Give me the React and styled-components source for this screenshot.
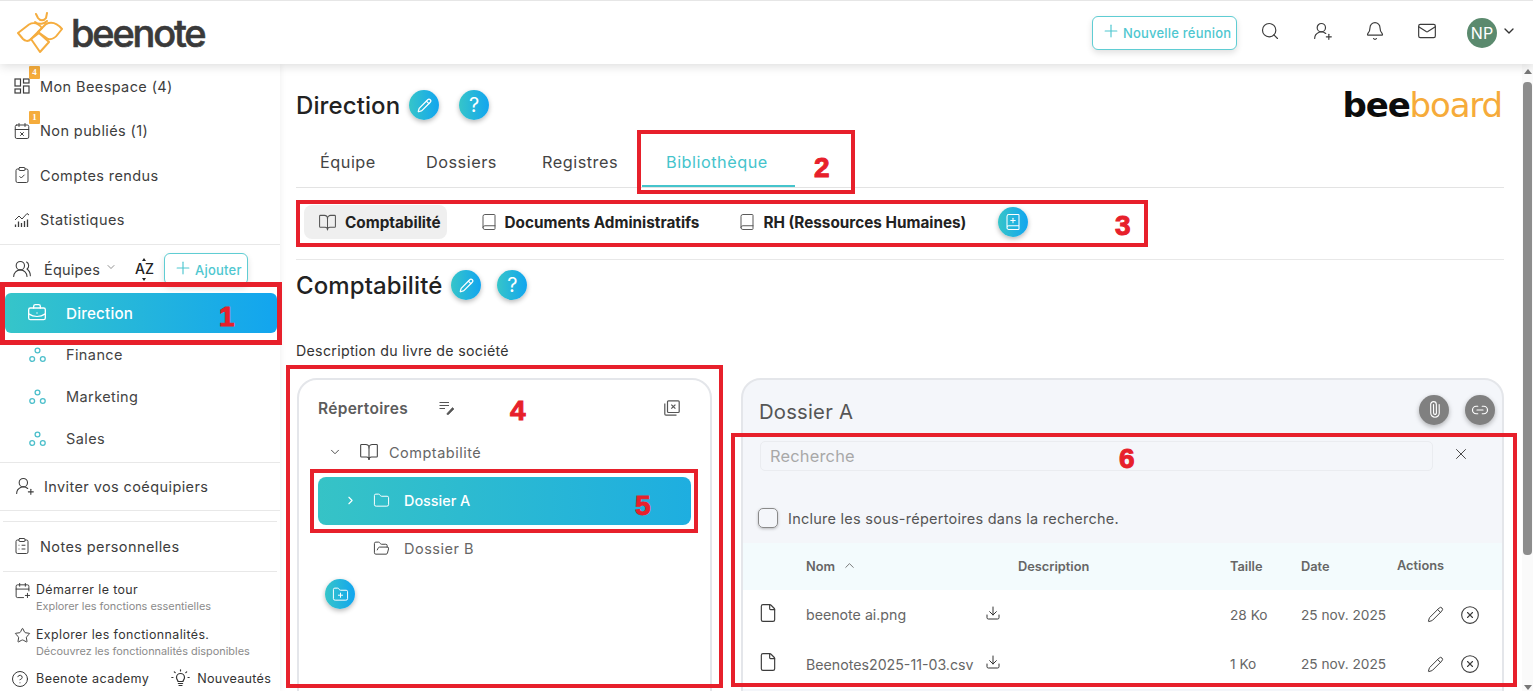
import styled, { createGlobalStyle } from "styled-components";
import {
  Bell,
  Book,
  BookOpen,
  BookPlus,
  BriefcaseBusiness,
  CalendarPlus,
  CalendarX,
  ChevronDown,
  ChevronRight,
  ChevronUp,
  CircleHelp,
  CircleX,
  ClipboardCheck,
  ClipboardList,
  Download,
  File,
  Folder,
  FolderOpen,
  FolderPlus,
  Link2,
  Mail,
  Paperclip,
  Pencil,
  Plus,
  Search,
  Star,
  UserRoundPlus,
  UsersRound,
  X,
} from "lucide-react";

const FONT = `Inter, "Liberation Sans", sans-serif`;
const BRAND = "linear-gradient(90deg, #36c5c9, #12a5ef)";

const GlobalStyle = createGlobalStyle`
  html, body {
    margin: 0;
    height: 100%;
    overflow: hidden;
    background: #fff;
    font-family: ${FONT};
    color: #333;
  }
  * { box-sizing: border-box; }
  svg { flex: none; }
`;

const Page = styled.div`
  position: relative;
  width: 1533px;
  height: 691px;
  overflow: hidden;
`;

// top bar
const TopBar = styled.header`
  position: relative;
  z-index: 2;
  height: 64px;
  display: flex;
  align-items: center;
  padding: 0 16px 0 17px;
  background: #fff;
  border-top: 1px solid #e6e6e6;
  box-shadow: 0 2px 10px rgba(0, 0, 0, 0.14);
`;

const Wordmark = styled.span`
  margin: 0 0 0 8px;
  font-size: 38px;
  font-weight: 500;
  letter-spacing: -2.2px;
  line-height: 40px;
  color: #3a3a3a;
  -webkit-text-stroke: 0.6px #3a3a3a;
`;

const TopActions = styled.div`
  margin-left: auto;
  display: flex;
  align-items: center;
  color: #3c3c3c;
`;

const OutlineButton = styled.button`
  display: flex;
  align-items: center;
  gap: 2px;
  height: ${(p) => p.$h}px;
  width: ${(p) => p.$w}px;
  padding: 1px 0 0 8px;
  border: 1px solid #5fcdd3;
  border-radius: 6px;
  background: #fff;
  box-shadow: 0 3px 6px rgba(0, 0, 0, 0.12);
  color: #4fc7d0;
  font-family: ${FONT};
  font-size: 13px;
  font-weight: 500;
  letter-spacing: 0.2px;
  & > svg { margin-top: -4px; }
`;

const TopIcon = styled.span`
  display: flex;
  justify-content: center;
  width: 20px;
  margin-top: -4px;
  margin-left: ${(p) => p.$ml}px;
`;

const Avatar = styled.span`
  display: flex;
  align-items: center;
  justify-content: center;
  width: 30px;
  height: 30px;
  margin-left: 30px;
  border-radius: 50%;
  background: #5b8a6e;
  color: #fff;
  font-size: 16px;
`;

const AvatarChevron = styled.span`
  display: flex;
  margin: -4px 0 0 4px;
  color: #333;
`;

const Body = styled.div`
  display: flex;
  height: 627px;
`;

// sidebar
const Sidebar = styled.aside`
  flex: 0 0 280px;
  display: flex;
  flex-direction: column;
  overflow: hidden;
  box-shadow: 1px 0 6px rgba(0, 0, 0, 0.06);
`;

const NavRow = styled.div`
  position: relative;
  display: flex;
  flex: none;
  align-items: center;
  height: ${(p) => p.$h || 44.5}px;
  padding-left: ${(p) => p.$pl || 13}px;
  gap: 9px;
  font-size: 14.5px;
  color: #3d3d3d;
  letter-spacing: 0.4px;
`;

const NavIcon = styled.span`
  display: flex;
  justify-content: center;
  width: ${(p) => p.$w || 18}px;
`;

const Badge = styled.span`
  position: absolute;
  left: 29px;
  top: 2px;
  width: 11px;
  height: 13px;
  border-radius: 1px;
  background: #f5ac3c;
  color: #fff;
  font-family: "Liberation Serif", serif;
  font-size: 9px;
  font-weight: 700;
  line-height: 13px;
  letter-spacing: 0;
  text-align: center;
`;

const Rule = styled.hr`
  flex: none;
  margin: ${(p) => p.$mt || 0}px ${(p) => p.$inset || 0}px 0;
  border: 0;
  border-top: 1px solid #e8e8e8;
`;

const TeamsRow = styled.div`
  display: flex;
  flex: none;
  align-items: center;
  height: 48px;
  padding-left: 12px;
  font-size: 14.5px;
  color: #3d3d3d;
`;

const TeamsLabel = styled.span`
  margin-left: 12px;
  letter-spacing: 0.2px;
`;

const TeamsChevron = styled.span`
  display: flex;
  margin: -4px 0 0 5px;
  color: #555;
`;

const SortAz = styled.span`
  position: relative;
  width: 18px;
  margin: 0 11px 0 18px;
  font-size: 14px;
  font-weight: 500;
  line-height: 18px;
  color: #222;
  &::before, &::after {
    content: "";
    position: absolute;
    left: 7px;
    border-left: 2px solid transparent;
    border-right: 2px solid transparent;
  }
  &::before { top: -2px; border-bottom: 3px solid #222; }
  &::after { bottom: -3px; border-top: 3px solid #222; }
`;

const TeamPill = styled.div`
  display: flex;
  flex: none;
  align-items: center;
  gap: 19px;
  height: 40px;
  margin: 0 3px 0.7px 5px;
  padding-left: 22px;
  border-radius: 6px;
  background: ${BRAND};
  color: #fff;
  font-size: 15.2px;
  font-weight: 500;
  letter-spacing: 0.2px;
`;

const TeamRow = styled.div`
  display: flex;
  flex: none;
  align-items: center;
  gap: 20px;
  height: 42px;
  padding-left: 29px;
  font-size: 14.5px;
  letter-spacing: 0.4px;
  color: #444;
`;

const TourRow = styled.div`
  display: flex;
  flex: none;
  align-items: flex-start;
  gap: 5px;
  height: 45px;
  padding: 10px 0 0 14px;
  color: #333;
`;

const TourTitle = styled.div`
  font-size: 12.4px;
  line-height: 16px;
  letter-spacing: 0.4px;
`;

const TourHint = styled.div`
  margin-top: 2px;
  font-size: 10.9px;
  line-height: 13px;
  color: #8b8b8b;
`;

const FooterRow = styled.div`
  display: flex;
  flex: none;
  align-items: center;
  height: 26px;
  margin-top: 4px;
  padding-left: 11px;
  font-size: 12.6px;
  color: #333;
`;

const FooterItem = styled.span`
  display: flex;
  align-items: center;
  gap: ${(p) => p.$gap}px;
  margin-left: ${(p) => p.$ml || 0}px;
  letter-spacing: ${(p) => p.$ls}px;
`;

// main column
const Main = styled.main`
  flex: 1;
  min-width: 0;
  padding: 25px 18px 0 16px;
  overflow: hidden;
`;

const TitleRow = styled.div`
  display: flex;
  align-items: center;
  height: 32px;
  margin-top: ${(p) => p.$mt || 0}px;
`;

const PageTitle = styled.h1`
  margin: 0 9px 0 0;
  font-size: 24px;
  font-weight: 500;
  letter-spacing: 0.1px;
  color: #222;
`;

const RoundButton = styled.span`
  display: flex;
  flex: none;
  align-items: center;
  justify-content: center;
  width: 30px;
  height: 30px;
  margin-top: ${(p) => p.$mt || 0}px;
  margin-left: ${(p) => p.$ml || 0}px;
  border-radius: 50%;
  background: ${(p) => p.$bg || BRAND};
  box-shadow: 0 2px 5px rgba(0, 0, 0, 0.28);
  color: #fff;
  font-size: 20px;
`;

const UprightClip = styled(Paperclip)`
  transform: rotate(-45deg);
`;

const BeeBoard = styled.span`
  margin-left: auto;
  margin-right: 2px;
  font-family: "DejaVu Sans", sans-serif;
  font-size: 34px;
  font-weight: 700;
  letter-spacing: -1.15px;
  color: #0c0c0c;
  & > b {
    font-weight: 400;
    color: #f6ab3a;
  }
`;

const Tabs = styled.nav`
  display: flex;
  height: 51px;
  margin-top: 16px;
  border-bottom: 1px solid #e3e3e3;
`;

const Tab = styled.span`
  display: flex;
  align-items: center;
  width: ${(p) => p.$w}px;
  height: 50px;
  padding: 2px 0 0 24px;
  font-size: 16.3px;
  letter-spacing: 0.5px;
  color: ${(p) => (p.$active ? "#45c4cc" : "#444")};
  border-bottom: 2px solid ${(p) => (p.$active ? "#45c4cc" : "transparent")};
`;

const BookTabs = styled.div`
  display: flex;
  align-items: center;
  height: 34px;
  margin: 17px 0 0 8px;
`;

const BookTab = styled.span`
  display: flex;
  align-items: center;
  gap: ${(p) => p.$gap}px;
  height: 34px;
  margin-right: ${(p) => p.$mr}px;
  padding: 0 ${(p) => p.$pad}px 0 14px;
  border-radius: 8px;
  background: ${(p) => (p.$active ? "#efefef" : "transparent")};
  font-size: 15.3px;
  font-weight: 700;
  color: #222;
  & > svg { color: #555; }
`;

const Description = styled.p`
  height: 18px;
  margin: 41px 0 0;
  font-size: 14.2px;
  line-height: 18px;
  letter-spacing: 0.3px;
  color: #333;
`;

const Panels = styled.div`
  display: grid;
  grid-template-columns: 415px 763px;
  column-gap: 29px;
  margin: 18px 0 0 1px;
`;

const TreePanel = styled.section`
  height: 400px;
  padding: 8px 19px 0;
  border: 2px solid #e4e6ea;
  border-radius: 20px 20px 0 0;
`;

const TreeHead = styled.div`
  display: flex;
  align-items: center;
  height: 40px;
  color: #555;
`;

const TreeTitle = styled.span`
  width: 121px;
  font-size: 15.5px;
  font-weight: 600;
  letter-spacing: 0.3px;
  color: #5c5c5c;
`;

const TreeClose = styled.span`
  display: flex;
  margin-left: auto;
  padding-right: 11px;
`;

const TreeRow = styled.div`
  display: flex;
  align-items: center;
  height: ${(p) => p.$h}px;
  margin: ${(p) => p.$mt || 0}px 0 ${(p) => p.$mb || 0}px;
  padding-left: ${(p) => p.$pl}px;
  font-size: 14.5px;
  letter-spacing: 0.5px;
  color: #666;
  & > svg { color: #444; }
`;

const TreeLabel = styled.span`
  display: flex;
  margin-left: ${(p) => p.$ml}px;
`;

const FolderPill = styled.div`
  display: flex;
  align-items: center;
  height: 48px;
  width: 373px;
  padding: 0 0 2px 26px;
  border-radius: 8px;
  background: linear-gradient(90deg, #36c3c6, #1eaee0);
  color: #fff;
  font-size: 14.4px;
  font-weight: 500;
`;

const FilePanel = styled.section`
  height: 400px;
  border: 2px solid #e4e6ea;
  border-radius: 20px 20px 0 0;
  background: #f4f6fa;
`;

const FileHead = styled.div`
  display: flex;
  align-items: center;
  height: 61px;
  padding: 0 7px 2px 16px;
`;

const FileTitle = styled.h2`
  flex: 1;
  margin: 4px 0 0;
  font-size: 20.3px;
  font-weight: 400;
  letter-spacing: 0.2px;
  color: #555;
`;

const SearchRow = styled.div`
  display: flex;
  align-items: center;
  gap: 19px;
  padding: 0 32px 0 17px;
`;

const SearchBox = styled.div`
  flex: 1;
  height: 30px;
  padding-left: 9px;
  border: 1px solid #eaecf0;
  border-radius: 5px;
  font-size: 16.4px;
  line-height: 28px;
  letter-spacing: 0.2px;
  color: #a8a8a8;
`;

const SearchClear = styled.span`
  display: flex;
  margin-top: -5px;
  color: #444;
`;

const CheckRow = styled.label`
  display: flex;
  align-items: center;
  gap: 10px;
  height: 20px;
  margin: 37px 0 0 15px;
  font-size: 14.5px;
  letter-spacing: 0.25px;
  color: #555;
`;

const CheckBox = styled.span`
  width: 20px;
  height: 20px;
  border: 1px solid #8a8a8a;
  border-radius: 5px;
  box-shadow: 0 1px 3px rgba(0, 0, 0, 0.25);
`;

const TableGrid = styled.div`
  display: grid;
  grid-template-columns: 63px 212px 212px 71px 96px 107px;
  align-items: center;
  height: ${(p) => p.$h}px;
  margin-top: ${(p) => p.$mt || 0}px;
  background: ${(p) => p.$bg};
  font-size: ${(p) => p.$size}px;
  font-weight: ${(p) => p.$weight};
  color: ${(p) => p.$color};
`;

const FileIconCell = styled.span`
  display: flex;
  padding-left: 15px;
  margin-top: -4px;
  color: #3c3c3c;
`;

const SortCell = styled.span`
  display: flex;
  align-items: center;
  gap: 7px;
  & > svg { margin-top: -3px; }
`;

const ActionsHead = styled.span`
  margin-top: -2px;
`;

const NameCell = styled.span`
  display: flex;
  align-items: center;
  justify-content: space-between;
  width: 195px;
  font-size: 14.2px;
`;

const DownloadIcon = styled(Download)`
  margin-top: -4px;
  color: #333;
`;

const ActionsCell = styled.span`
  display: flex;
  align-items: center;
  gap: 16px;
  padding-left: 30px;
  color: #3c3c3c;
`;

// fake browser scrollbar, the page itself does not scroll here
const ScrollBar = styled.div`
  flex: 0 0 11px;
  display: flex;
  flex-direction: column;
  align-items: center;
  background: #fafafa;
`;

const ArrowUp = styled.span`
  margin-top: 5px;
  border-left: 4px solid transparent;
  border-right: 4px solid transparent;
  border-bottom: 5px solid #777;
`;

const Thumb = styled.span`
  width: 9px;
  height: 473px;
  margin-top: 8px;
  border-radius: 4px;
  background: #8d8d8d;
`;

const ArrowDown = styled.span`
  margin-top: auto;
  margin-bottom: 1px;
  border-left: 4px solid transparent;
  border-right: 4px solid transparent;
  border-top: 5px solid #777;
`;

// red annotations painted over the capture
const Mark = styled.div`
  position: absolute;
  left: ${(p) => p.$x}px;
  top: ${(p) => p.$y}px;
  width: ${(p) => p.$w}px;
  height: ${(p) => p.$h}px;
  border: ${(p) => p.$b || 4}px solid #e7202b;
  pointer-events: none;
`;

const MarkNumber = styled.span`
  position: absolute;
  left: ${(p) => p.$x}px;
  top: ${(p) => p.$y}px;
  font-family: "Liberation Sans", sans-serif;
  font-size: 28px;
  font-weight: 700;
  line-height: 28px;
  color: #e7202b;
  -webkit-text-stroke: 1px #e7202b;
`;

// drawings with no matching icon in the package
const BeeLogo = () => (
  <svg width="46" height="41" viewBox="0 0 46 41" fill="none" stroke="#f5ad3f" strokeWidth="2" strokeLinejoin="round" strokeLinecap="round">
    <path d="M1 21 L12 12.5 C17 9.5 22 12 25 16 L14 27 C11 30 8 29 6 27 Z" />
    <path d="M45 17 C40 11 34 9.5 29 12 L21 20 L31 27 C35 28 39 25 41 22 Z" />
    <path d="M14 27 L23 40 L32 30 L22 21 Z" />
    <path d="M19 2 L21 6 C23 9 27 9 29 6 L30 1 M18 10 C22 13 27 12 30 9" />
  </svg>
);

const BeespaceIcon = () => (
  <svg width="16" height="16" viewBox="0 0 16 16" fill="none" stroke="currentColor" strokeWidth="1.2">
    <rect x="1" y="1" width="5.5" height="7" />
    <rect x="9.5" y="1" width="5.5" height="4" />
    <rect x="1" y="11" width="5.5" height="4" />
    <rect x="9.5" y="8" width="5.5" height="7" />
  </svg>
);

const StatsIcon = () => (
  <svg width="16" height="16" viewBox="0 0 16 16" fill="none" stroke="currentColor" strokeWidth="1">
    <path d="M1 8 L5 4 L8 7 L13 1.5 L15 3" />
    <path d="M1.5 15 V12.5 M4.5 15 V9.5 M7.5 15 V11 M10.5 15 V9 M13.5 15 V7.5" strokeWidth="1.3" />
  </svg>
);

const TeamDots = () => (
  <svg width="17" height="18" viewBox="0 0 17 18" fill="none" stroke="#4cbfcb" strokeWidth="1.3">
    <circle cx="8.5" cy="4.5" r="2.4" />
    <circle cx="3.2" cy="13" r="2.4" />
    <circle cx="13.8" cy="13" r="2.4" />
  </svg>
);

const ListEditIcon = () => (
  <svg width="16" height="14" viewBox="0 0 16 14" fill="none" stroke="currentColor" strokeWidth="1.2">
    <path d="M0.5 1.5 H10 M0.5 4.5 H10 M0.5 7.5 H6" />
    <path d="M8 12.5 L13.5 6.5 L15 8 L9.5 13.5 L8 13.5 Z" fill="currentColor" strokeWidth="0.6" />
  </svg>
);

const CollapseIcon = () => (
  <svg width="16" height="16" viewBox="0 0 16 16" fill="none" stroke="currentColor" strokeWidth="1.2">
    <rect x="3.5" y="0.8" width="11.7" height="11.7" rx="1" />
    <path d="M0.8 3.5 V14 C0.8 14.8 1.2 15.2 2 15.2 H12.5" />
    <path d="M7.3 4.6 L11.4 8.7 M11.4 4.6 L7.3 8.7" />
  </svg>
);

const BulbIcon = () => (
  <svg width="19" height="19" viewBox="0 0 19 19" fill="none" stroke="currentColor" strokeWidth="1.2" strokeLinecap="round">
    <path d="M7 12.5 C7 11 5.5 10.5 5.5 8.5 A4 4 0 0 1 13.5 8.5 C13.5 10.5 12 11 12 12.5 Z" />
    <path d="M7.4 14.5 H11.6 M8 16.5 H11" />
    <path d="M9.5 0.8 V2 M3.3 2.8 L4.2 3.7 M15.7 2.8 L14.8 3.7 M0.8 8.5 H2 M17 8.5 H18.2" />
  </svg>
);

const marks = [
  { x: 0, y: 282, w: 282, h: 63, b: 5 },
  { x: 637, y: 130, w: 218, h: 64 },
  { x: 296, y: 200, w: 852, h: 47 },
  { x: 286, y: 365, w: 437, h: 323 },
  { x: 310, y: 469, w: 388, h: 64 },
  { x: 731, y: 433, w: 786, h: 254 },
];

const numbers = [
  { n: 1, x: 219, y: 303 },
  { n: 2, x: 814, y: 154 },
  { n: 3, x: 1115, y: 212 },
  { n: 4, x: 510, y: 397 },
  { n: 5, x: 635, y: 492 },
  { n: 6, x: 1119, y: 445 },
];

const files = [
  { name: "beenote ai.png", size: "28 Ko", date: "25 nov. 2025" },
  { name: "Beenotes2025-11-03.csv", size: "1 Ko", date: "25 nov. 2025" },
];

export default function App() {
  return (
    <Page>
      <GlobalStyle />
      <TopBar>
        <BeeLogo />
        <Wordmark>beenote</Wordmark>
        <TopActions>
          <OutlineButton $w={145} $h={34}>
            <Plus size={20} strokeWidth={1.4} />
            Nouvelle réunion
          </OutlineButton>
          <TopIcon $ml={23}><Search size={20} strokeWidth={1.4} /></TopIcon>
          <TopIcon $ml={33}><UserRoundPlus size={20} strokeWidth={1.4} /></TopIcon>
          <TopIcon $ml={32}><Bell size={20} strokeWidth={1.4} /></TopIcon>
          <TopIcon $ml={32}><Mail size={20} strokeWidth={1.4} /></TopIcon>
          <Avatar>NP</Avatar>
          <AvatarChevron><ChevronDown size={16} strokeWidth={2} /></AvatarChevron>
        </TopActions>
      </TopBar>

      <Body>
        <Sidebar>
          <NavRow>
            <NavIcon><BeespaceIcon /></NavIcon>
            Mon Beespace (4)
            <Badge>4</Badge>
          </NavRow>
          <NavRow>
            <NavIcon><CalendarX size={18} strokeWidth={1.3} /></NavIcon>
            Non publiés (1)
            <Badge>1</Badge>
          </NavRow>
          <NavRow>
            <NavIcon><ClipboardCheck size={18} strokeWidth={1.3} /></NavIcon>
            Comptes rendus
          </NavRow>
          <NavRow>
            <NavIcon><StatsIcon /></NavIcon>
            Statistiques
          </NavRow>
          <Rule $mt={2} />
          <TeamsRow>
            <UsersRound size={20} strokeWidth={1.3} />
            <TeamsLabel>Équipes</TeamsLabel>
            <TeamsChevron><ChevronDown size={12} strokeWidth={1.3} /></TeamsChevron>
            <SortAz>AZ</SortAz>
            <OutlineButton $w={84} $h={32}>
              <Plus size={20} strokeWidth={1.4} />
              Ajouter
            </OutlineButton>
          </TeamsRow>
          <TeamPill>
            <BriefcaseBusiness size={20} strokeWidth={1.6} />
            Direction
          </TeamPill>
          <TeamRow><TeamDots />Finance</TeamRow>
          <TeamRow><TeamDots />Marketing</TeamRow>
          <TeamRow><TeamDots />Sales</TeamRow>
          <Rule $mt={2} />
          <NavRow $h={47} $pl={15}>
            <NavIcon $w={20}><UserRoundPlus size={20} strokeWidth={1.3} /></NavIcon>
            Inviter vos coéquipiers
          </NavRow>
          <Rule />
          <Rule $mt={10} $inset={3} />
          <NavRow $h={49}>
            <NavIcon><ClipboardList size={18} strokeWidth={1.3} /></NavIcon>
            Notes personnelles
          </NavRow>
          <Rule $inset={3} />
          <TourRow>
            <CalendarPlus size={17} strokeWidth={1.3} />
            <div>
              <TourTitle>Démarrer le tour</TourTitle>
              <TourHint>Explorer les fonctions essentielles</TourHint>
            </div>
          </TourRow>
          <TourRow>
            <Star size={17} strokeWidth={1.3} />
            <div>
              <TourTitle>Explorer les fonctionnalités.</TourTitle>
              <TourHint>Découvrez les fonctionnalités disponibles</TourHint>
            </div>
          </TourRow>
          <FooterRow>
            <FooterItem $gap={7} $ls={0.4}>
              <CircleHelp size={18} strokeWidth={1.3} />
              Beenote academy
            </FooterItem>
            <FooterItem $gap={7} $ml={22} $ls={0.25}>
              <BulbIcon />
              Nouveautés
            </FooterItem>
          </FooterRow>
        </Sidebar>

        <Main>
          <TitleRow>
            <PageTitle>Direction</PageTitle>
            <RoundButton><Pencil size={15} strokeWidth={2} /></RoundButton>
            <RoundButton $ml={20}>?</RoundButton>
            <BeeBoard>bee<b>board</b></BeeBoard>
          </TitleRow>

          <Tabs>
            <Tab $w={106}>Équipe</Tab>
            <Tab $w={116}>Dossiers</Tab>
            <Tab $w={124}>Registres</Tab>
            <Tab $w={153} $active>Bibliothèque</Tab>
          </Tabs>

          <BookTabs>
            <BookTab $active $gap={8} $pad={6} $mr={19}>
              <BookOpen size={19} strokeWidth={1.3} />
              Comptabilité
            </BookTab>
            <BookTab $gap={7} $pad={0} $mr={25}>
              <Book size={18} strokeWidth={1.3} />
              Documents Administratifs
            </BookTab>
            <BookTab $gap={7} $pad={0} $mr={32}>
              <Book size={18} strokeWidth={1.3} />
              RH (Ressources Humaines)
            </BookTab>
            <RoundButton><BookPlus size={18} strokeWidth={1.4} /></RoundButton>
          </BookTabs>

          <Rule $mt={20} />

          <TitleRow $mt={9}>
            <PageTitle>Comptabilité</PageTitle>
            <RoundButton><Pencil size={15} strokeWidth={2} /></RoundButton>
            <RoundButton $ml={16}>?</RoundButton>
          </TitleRow>

          <Description>Description du livre de société</Description>

          <Panels>
            <TreePanel>
              <TreeHead>
                <TreeTitle>Répertoires</TreeTitle>
                <ListEditIcon />
                <TreeClose><CollapseIcon /></TreeClose>
              </TreeHead>
              <TreeRow $h={40} $mt={4} $mb={5} $pl={10}>
                <ChevronDown size={14} strokeWidth={1.6} />
                <TreeLabel $ml={17}><BookOpen size={20} strokeWidth={1.3} color="#444" /></TreeLabel>
                <TreeLabel $ml={10}>Comptabilité</TreeLabel>
              </TreeRow>
              <FolderPill>
                <ChevronRight size={13} strokeWidth={2} />
                <TreeLabel $ml={16}><Folder size={17} strokeWidth={1.4} /></TreeLabel>
                <TreeLabel $ml={14}>Dossier A</TreeLabel>
              </FolderPill>
              <TreeRow $h={46} $pl={55}>
                <FolderOpen size={17} strokeWidth={1.4} />
                <TreeLabel $ml={14}>Dossier B</TreeLabel>
              </TreeRow>
              <RoundButton $ml={7} $mt={8}>
                <FolderPlus size={17} strokeWidth={1.4} />
              </RoundButton>
            </TreePanel>

            <FilePanel>
              <FileHead>
                <FileTitle>Dossier A</FileTitle>
                <RoundButton $bg="#808080"><UprightClip size={17} strokeWidth={1.6} /></RoundButton>
                <RoundButton $bg="#808080" $ml={16}><Link2 size={18} strokeWidth={1.6} /></RoundButton>
              </FileHead>
              <SearchRow>
                <SearchBox>Recherche</SearchBox>
                <SearchClear><X size={18} strokeWidth={1.3} /></SearchClear>
              </SearchRow>
              <CheckRow>
                <CheckBox />
                Inclure les sous-répertoires dans la recherche.
              </CheckRow>
              <TableGrid $h={47} $mt={15} $bg="#f3fbfd" $size={12.8} $weight={600} $color="#666">
                <span />
                <SortCell>Nom <ChevronUp size={15} strokeWidth={1.4} /></SortCell>
                <span>Description</span>
                <span>Taille</span>
                <span>Date</span>
                <ActionsHead>Actions</ActionsHead>
              </TableGrid>
              {files.map((f) => (
                <TableGrid key={f.name} $h={49.5} $bg="#fff" $size={13.7} $weight={400} $color="#666">
                  <FileIconCell><File size={20} strokeWidth={1.4} /></FileIconCell>
                  <NameCell>
                    {f.name}
                    <DownloadIcon size={16} strokeWidth={1.5} />
                  </NameCell>
                  <span />
                  <span>{f.size}</span>
                  <span>{f.date}</span>
                  <ActionsCell>
                    <Pencil size={17} strokeWidth={1.4} />
                    <CircleX size={20} strokeWidth={1.3} />
                  </ActionsCell>
                </TableGrid>
              ))}
            </FilePanel>
          </Panels>
        </Main>

        <ScrollBar>
          <ArrowUp />
          <Thumb />
          <ArrowDown />
        </ScrollBar>
      </Body>

      {marks.map((m) => (
        <Mark key={m.x} $x={m.x} $y={m.y} $w={m.w} $h={m.h} $b={m.b} />
      ))}
      {numbers.map((m) => (
        <MarkNumber key={m.n} $x={m.x} $y={m.y}>{m.n}</MarkNumber>
      ))}
    </Page>
  );
}
